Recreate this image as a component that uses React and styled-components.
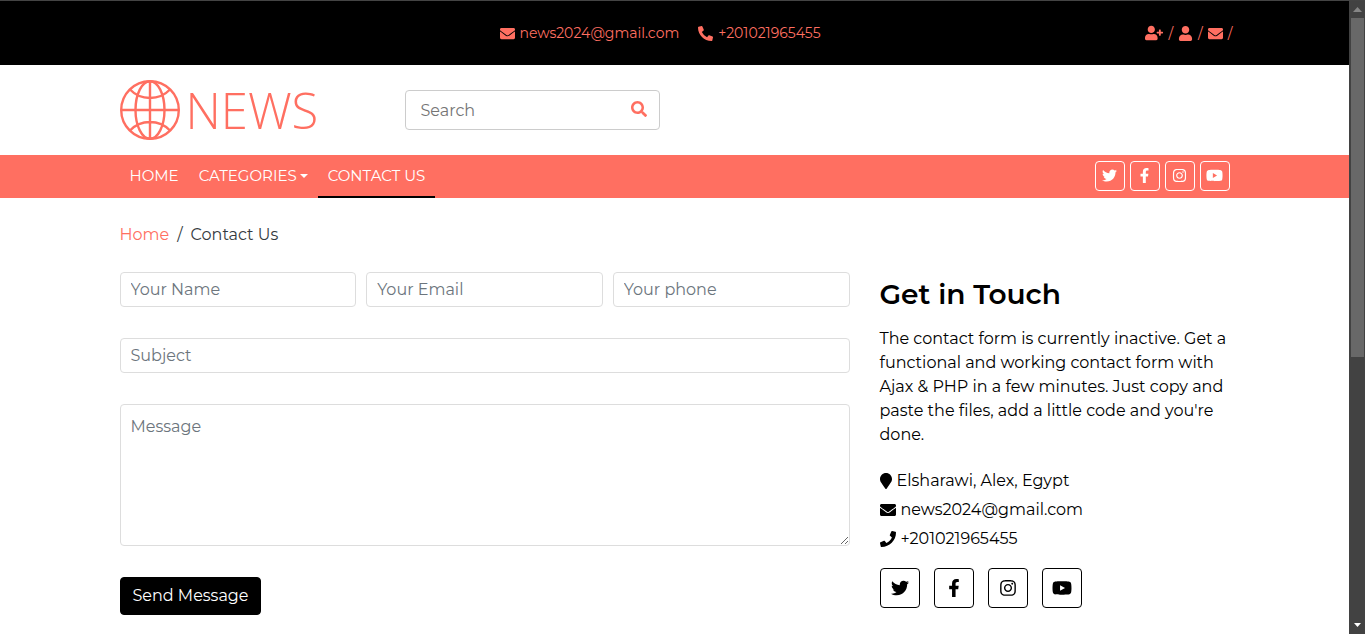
import React from "react";
import styled, { createGlobalStyle, css } from "styled-components";
import {
  FaEnvelope,
  FaFacebookF,
  FaInstagram,
  FaMapMarker,
  FaPhone,
  FaPhoneAlt,
  FaSearch,
  FaTwitter,
  FaUser,
  FaUserPlus,
  FaYoutube,
} from "react-icons/fa";

const coral = "#ff6f61";

const GlobalStyle = createGlobalStyle`
  *, *::before, *::after { box-sizing: border-box; }
  body {
    margin: 0;
    background: #fff;
    color: #000;
    font-family: Montserrat, Inter, sans-serif;
    font-size: 16px;
    line-height: 24px;
  }
  a { color: inherit; text-decoration: none; }
  h2, p, ul, ol { margin: 0; padding: 0; }
  ul, ol { list-style: none; }
  input, textarea, button { font: inherit; }
  svg { display: block; flex: none; }
`;

const Shell = styled.div`
  display: grid;
  grid-template-columns: minmax(0, 1fr) 16px;
  height: 100vh;
  overflow: hidden;
  border-top: 1px solid #444;
`;

const Page = styled.div`
  min-width: 0;
`;

const Container = styled.div`
  max-width: 1140px;
  margin: 0 auto;
  padding: 0 15px;
`;

const TopBar = styled.div`
  background: #000;
  color: ${coral};
  font-size: 14px;
`;

const TopRow = styled(Container)`
  display: grid;
  grid-template-columns: repeat(3, minmax(0, 1fr));
  column-gap: 30px;
  align-items: center;
  height: 64px;
`;

const TopContact = styled.div`
  grid-column: 2;
  display: flex;
  gap: 19px;
`;

const IconText = styled.span`
  display: flex;
  align-items: center;
  gap: 5px;
  white-space: nowrap;
`;

const AccountLinks = styled.div`
  display: flex;
  justify-content: flex-end;
  align-items: center;
  gap: 5px;
  margin-right: -3px;
`;

const HeaderRow = styled(Container)`
  display: grid;
  grid-template-columns: repeat(4, minmax(0, 1fr));
  column-gap: 30px;
  align-items: center;
  height: 90px;
`;

const Logo = styled.a`
  display: flex;
  align-items: center;
  gap: 6px;
  color: ${coral};
  font-family: "Open Sans", sans-serif;
  font-size: 49px;
  font-weight: 300;
  line-height: 60px;
`;

const SearchForm = styled.form`
  display: flex;
  align-items: center;
  height: 40px;
  border: 1px solid #ccc;
  border-radius: 4px;
`;

const SearchInput = styled.input`
  flex: 1;
  min-width: 0;
  height: 38px;
  padding: 0 15px;
  border: 0;
  background: none;
  outline: none;
  &::placeholder { color: #757575; opacity: 1; }
`;

const SearchButton = styled.button`
  display: flex;
  padding: 0 12px 2px;
  border: 0;
  background: none;
  color: ${coral};
  cursor: pointer;
`;

const NavBar = styled.nav`
  background: ${coral};
  color: #fff;
`;

const NavRow = styled(Container)`
  display: flex;
  justify-content: space-between;
  height: 43px;
`;

const NavList = styled.ul`
  display: flex;
`;

const NavLink = styled.a`
  display: flex;
  align-items: center;
  gap: 3px;
  height: 43px;
  padding: 0 10px;
  font-size: 15px;
  border-bottom: 2px solid ${(p) => (p.$active ? "#000" : "transparent")};
`;

const Caret = styled.span`
  border-top: 4px solid;
  border-left: 4px solid transparent;
  border-right: 4px solid transparent;
`;

const SocialList = styled.ul`
  display: flex;
  gap: ${(p) => (p.$large ? 14 : 5)}px;
  padding-top: ${(p) => (p.$large ? 17 : 6)}px;
`;

const SocialLink = styled.a`
  display: flex;
  align-items: center;
  justify-content: center;
  width: ${(p) => (p.$large ? 40 : 30)}px;
  height: ${(p) => (p.$large ? 40 : 30)}px;
  padding-bottom: ${(p) => (p.$large ? 0 : 2)}px;
  border: 1px solid;
  border-radius: 4px;
`;

const Breadcrumb = styled.ol`
  display: flex;
  gap: 8px;
  padding: 25px 0;
  color: #343a40;
`;

const BreadcrumbLink = styled.a`
  color: ${coral};
`;

const ContactGrid = styled.main`
  display: grid;
  grid-template-columns: minmax(0, 730px) minmax(0, 350px);
  column-gap: 30px;
`;

const ContactForm = styled.form`
  display: grid;
  gap: 31px;
  justify-items: start;
`;

const FieldRow = styled.div`
  display: grid;
  grid-template-columns: repeat(3, minmax(0, 1fr));
  gap: 10px;
  width: 100%;
`;

const fieldStyle = css`
  display: block;
  width: 100%;
  padding: 0 10px;
  border: 1px solid #ddd;
  border-radius: 4px;
  background: #fff;
  &::placeholder { color: #6c757d; opacity: 1; }
`;

const Field = styled.input`
  ${fieldStyle}
  height: 35px;
`;

const MessageField = styled.textarea`
  ${fieldStyle}
  height: 142px;
  padding: 10px;
  resize: vertical;
`;

const SendButton = styled.button`
  height: 38px;
  padding: 0 12px;
  border: 1px solid #000;
  border-radius: 4px;
  background: #000;
  color: #fff;
  cursor: pointer;
`;

const Info = styled.section`
  padding-top: 5px;
`;

const InfoTitle = styled.h2`
  margin-bottom: 16px;
  font-size: 28px;
  font-weight: 600;
  line-height: 34px;
`;

const InfoList = styled.ul`
  display: grid;
  gap: 5px;
  margin-top: 22px;
`;

const MapPin = styled(FaMapMarker)`
  width: 12px;
`;

const ScrollTrack = styled.div`
  display: flex;
  flex-direction: column;
  align-items: center;
  justify-content: space-between;
  padding: 0 1px 0 2px;
  background: #424242;
`;

const ScrollThumb = styled.div`
  width: 13px;
  height: 339px;
  margin-bottom: auto;
  background: #686868;
`;

const ScrollArrow = styled.svg`
  width: 13px;
  height: 17px;
  fill: ${(p) => (p.$end ? "#fff" : "#868686")};
`;

const socials = [
  { name: "Twitter", Icon: FaTwitter, small: 15, large: 18 },
  { name: "Facebook", Icon: FaFacebookF, small: 15, large: 18 },
  { name: "Instagram", Icon: FaInstagram, small: 15, large: 18 },
  { name: "YouTube", Icon: FaYoutube, small: 17, large: 20 },
];

function Socials({ size = "small" }) {
  const large = size === "large";
  return (
    <SocialList $large={large}>
      {socials.map(({ name, Icon, ...sizes }) => (
        <li key={name}>
          <SocialLink href="#" aria-label={name} $large={large}>
            <Icon size={sizes[size]} />
          </SocialLink>
        </li>
      ))}
    </SocialList>
  );
}

function Globe() {
  return (
    <svg width="60" height="60" viewBox="0 0 60 60" fill="none" stroke="currentColor" strokeWidth="2.4" aria-hidden="true">
      <circle cx="30" cy="30" r="28.800" />
      <ellipse cx="30" cy="30" rx="14.500" ry="28.800" />
      <path d="M30 1v58M1 30h58M10 9.500Q18 18 30 18T50 9.500M10 50.500Q18 42 30 42T50 50.500" />
    </svg>
  );
}

export default function App() {
  return (
    <>
      <GlobalStyle />
      <Shell>
        <Page>
          <TopBar>
            <TopRow>
              <TopContact>
                <IconText><FaEnvelope size={15} />news2024@gmail.com</IconText>
                <IconText><FaPhoneAlt size={15} />+201021965455</IconText>
              </TopContact>
              <AccountLinks>
                <a href="#" aria-label="Register"><FaUserPlus size={18} /></a>/
                <a href="#" aria-label="Account"><FaUser size={15} /></a>/
                <a href="#" aria-label="Messages"><FaEnvelope size={15} /></a>/
              </AccountLinks>
            </TopRow>
          </TopBar>

          <HeaderRow as="header">
            <Logo href="#"><Globe />NEWS</Logo>
            <SearchForm role="search">
              <SearchInput type="text" placeholder="Search" aria-label="Search" />
              <SearchButton type="button" aria-label="Submit search"><FaSearch size={16} /></SearchButton>
            </SearchForm>
          </HeaderRow>

          <NavBar>
            <NavRow>
              <NavList>
                <li><NavLink href="#">HOME</NavLink></li>
                <li><NavLink href="#">CATEGORIES<Caret /></NavLink></li>
                <li><NavLink href="#" $active aria-current="page">CONTACT US</NavLink></li>
              </NavList>
              <Socials />
            </NavRow>
          </NavBar>

          <Container>
            <Breadcrumb>
              <li><BreadcrumbLink href="#">Home</BreadcrumbLink></li>
              <li aria-hidden="true">/</li>
              <li>Contact Us</li>
            </Breadcrumb>

            <ContactGrid>
              <ContactForm>
                <FieldRow>
                  <Field type="text" placeholder="Your Name" aria-label="Your Name" />
                  <Field type="email" placeholder="Your Email" aria-label="Your Email" />
                  <Field type="tel" placeholder="Your phone" aria-label="Your phone" />
                </FieldRow>
                <Field type="text" placeholder="Subject" aria-label="Subject" />
                <MessageField placeholder="Message" aria-label="Message" />
                <SendButton type="button">Send Message</SendButton>
              </ContactForm>

              <Info>
                <InfoTitle>Get in Touch</InfoTitle>
                <p>
                  The contact form is currently inactive. Get a functional and working contact form
                  with Ajax &amp; PHP in a few minutes. Just copy and paste the files, add a little
                  code and you're done.
                </p>
                <InfoList>
                  <li><IconText><MapPin size={16} />Elsharawi, Alex, Egypt</IconText></li>
                  <li><IconText><FaEnvelope size={16} />news2024@gmail.com</IconText></li>
                  <li><IconText><FaPhone size={16} />+201021965455</IconText></li>
                </InfoList>
                <Socials size="large" />
              </Info>
            </ContactGrid>
          </Container>
        </Page>

        <ScrollTrack aria-hidden="true">
          <ScrollArrow viewBox="0 0 13 17"><path d="M2 11L6.500 6 11 11z" /></ScrollArrow>
          <ScrollThumb />
          <ScrollArrow viewBox="0 0 13 17" $end><path d="M3 6h7L6.500 10z" /></ScrollArrow>
        </ScrollTrack>
      </Shell>
    </>
  );
}
